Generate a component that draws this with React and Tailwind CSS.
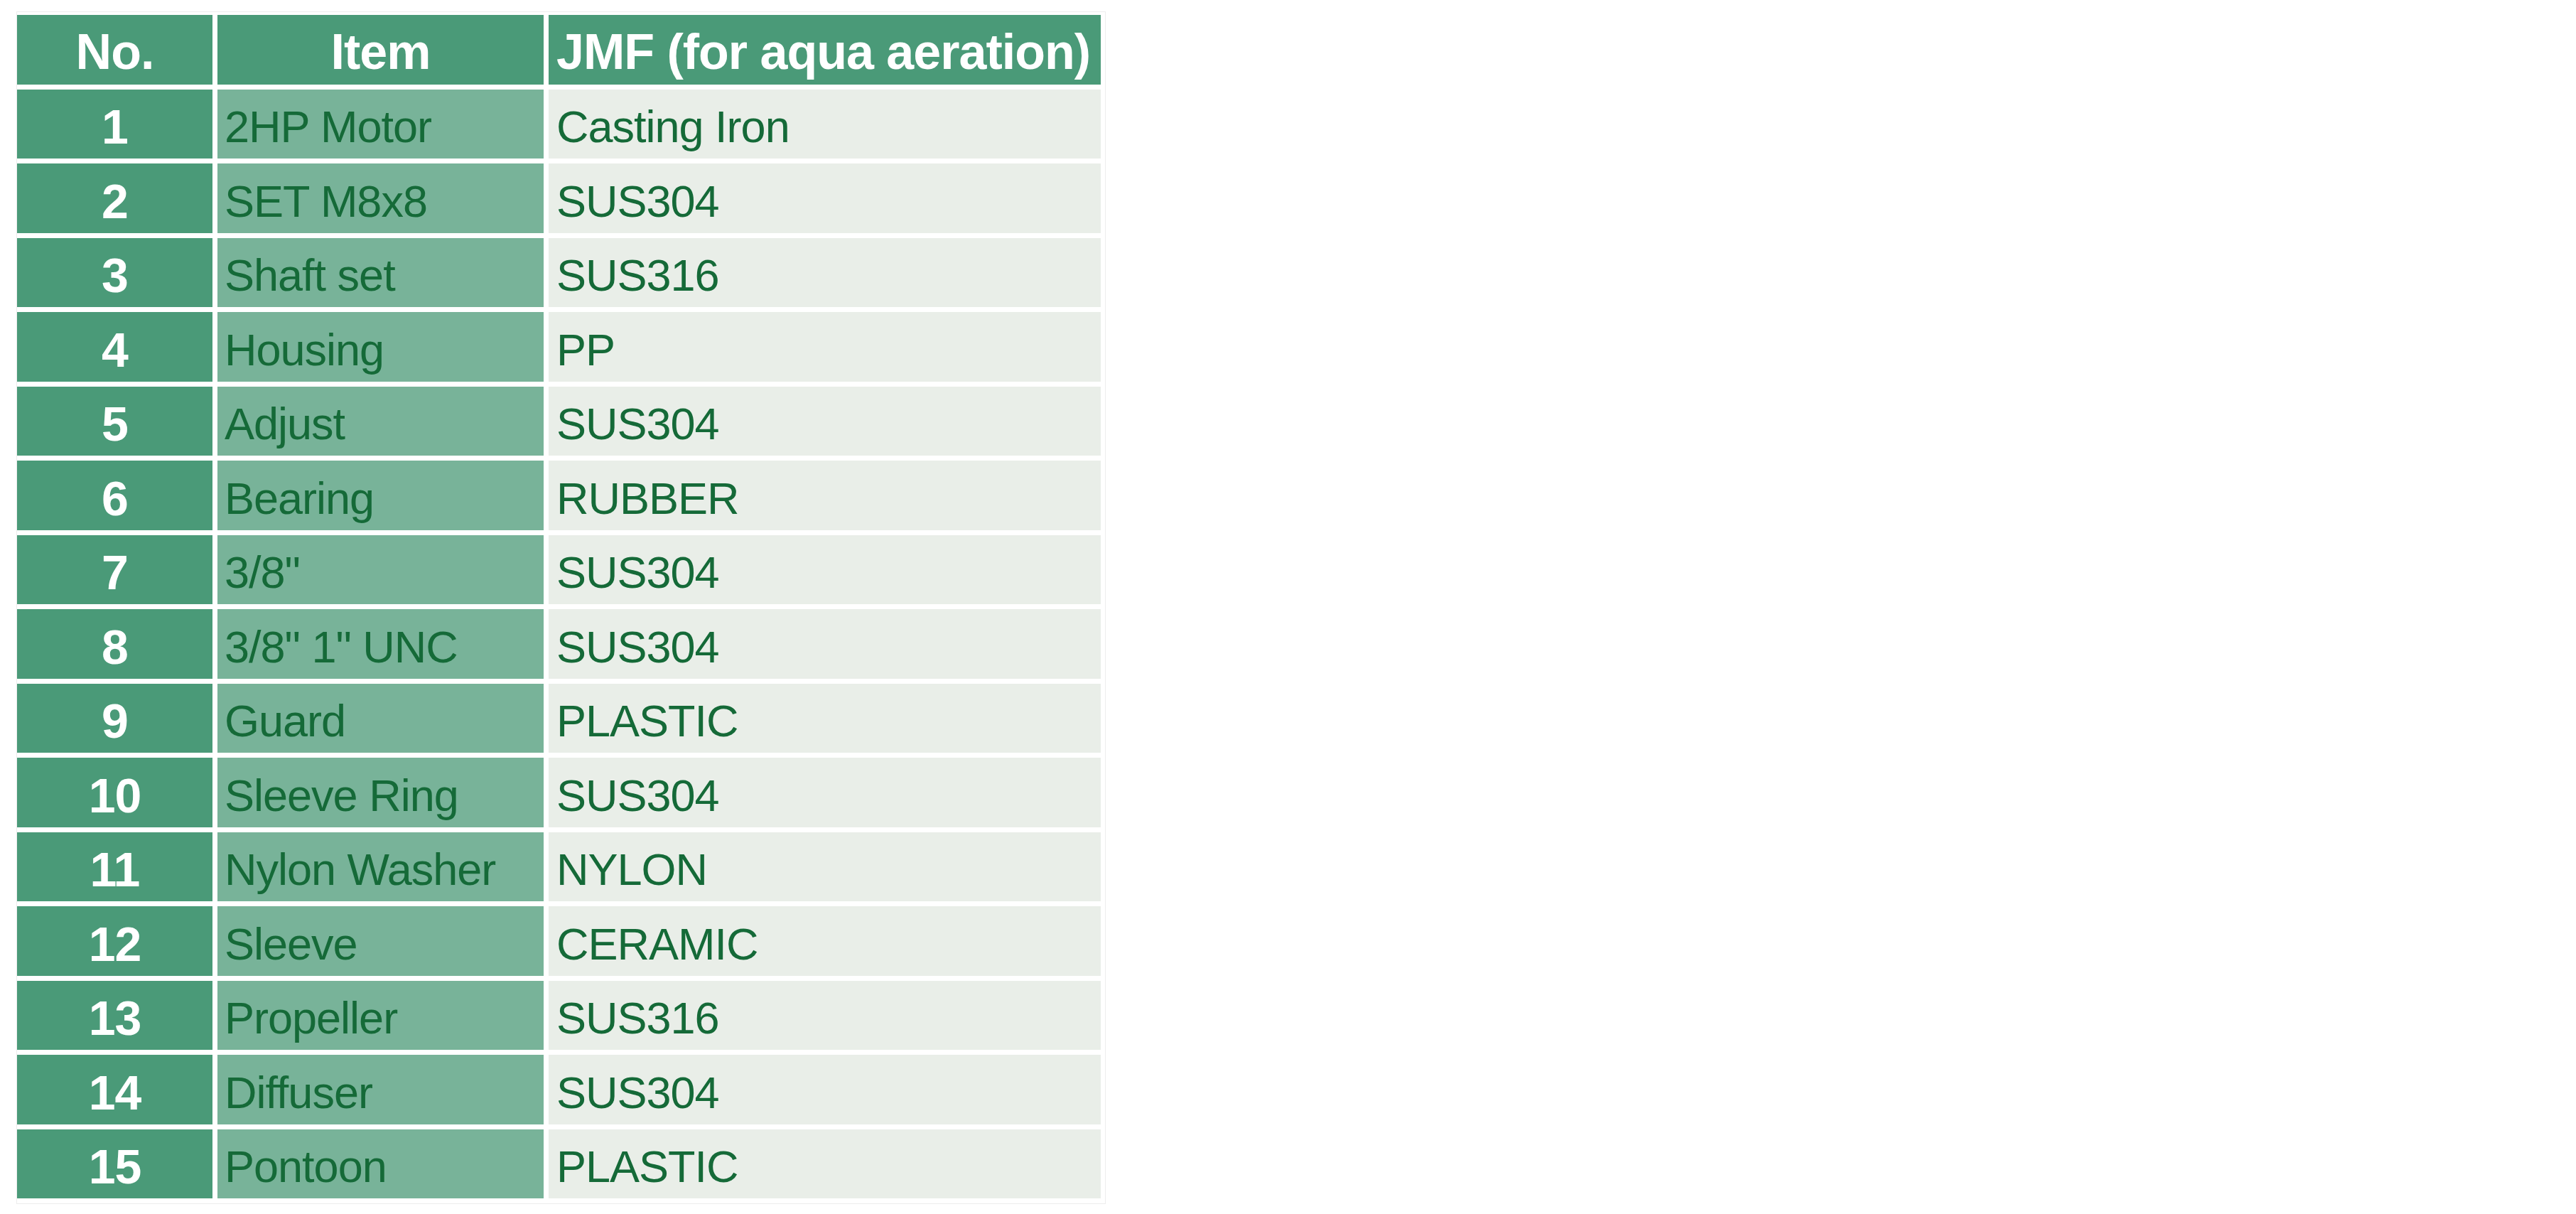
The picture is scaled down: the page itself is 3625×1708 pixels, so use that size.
import React from 'react';

const rows = [
  ['1', '2HP Motor', 'Casting Iron'],
  ['2', 'SET M8x8', 'SUS304'],
  ['3', 'Shaft set', 'SUS316'],
  ['4', 'Housing', 'PP'],
  ['5', 'Adjust', 'SUS304'],
  ['6', 'Bearing', 'RUBBER'],
  ['7', '3/8"', 'SUS304'],
  ['8', '3/8" 1" UNC', 'SUS304'],
  ['9', 'Guard', 'PLASTIC'],
  ['10', 'Sleeve Ring', 'SUS304'],
  ['11', 'Nylon Washer', 'NYLON'],
  ['12', 'Sleeve', 'CERAMIC'],
  ['13', 'Propeller', 'SUS316'],
  ['14', 'Diffuser', 'SUS304'],
  ['15', 'Pontoon', 'PLASTIC'],
];

export default function App() {
  return (
    <div className="min-h-screen bg-white pl-[23px] pt-[16px] font-['Liberation_Sans',Arial,sans-serif]">
      <div className="w-[1533px] border border-[#ededed] pt-[4px] pr-[5px] pb-[7px]">
        <div className="grid grid-cols-[275px_459px_777px] auto-rows-[97.5px] gap-[7px]">
          {/* header */}
          <div className="flex items-center justify-center bg-[#4a9a78] pt-[8px] text-[70px] font-bold tracking-[-1px] text-white">
            No.
          </div>
          <div className="flex items-center justify-center bg-[#4a9a78] pt-[8px] text-[70px] font-bold tracking-[-1px] text-white">
            Item
          </div>
          <div className="flex items-center whitespace-nowrap bg-[#4a9a78] pl-[11px] pt-[8px] text-[70px] font-bold tracking-[-1px] text-white">
            JMF (for aqua aeration)
          </div>

          {rows.map(([no, item, mat]) => (
            <React.Fragment key={no}>
              <div className="flex items-center justify-center bg-[#4a9a78] pt-[8px] text-[68px] font-bold tracking-[-1px] text-white">
                {no}
              </div>
              <div className="flex items-center whitespace-nowrap bg-[#78b399] pl-[10px] pt-[8px] text-[63px] tracking-[-1px] text-[#156a38]">
                {item}
              </div>
              <div className="flex items-center whitespace-nowrap bg-[#e9eee8] pl-[11px] pt-[8px] text-[63px] tracking-[-1px] text-[#156a38]">
                {mat}
              </div>
            </React.Fragment>
          ))}
        </div>
      </div>
    </div>
  );
}
